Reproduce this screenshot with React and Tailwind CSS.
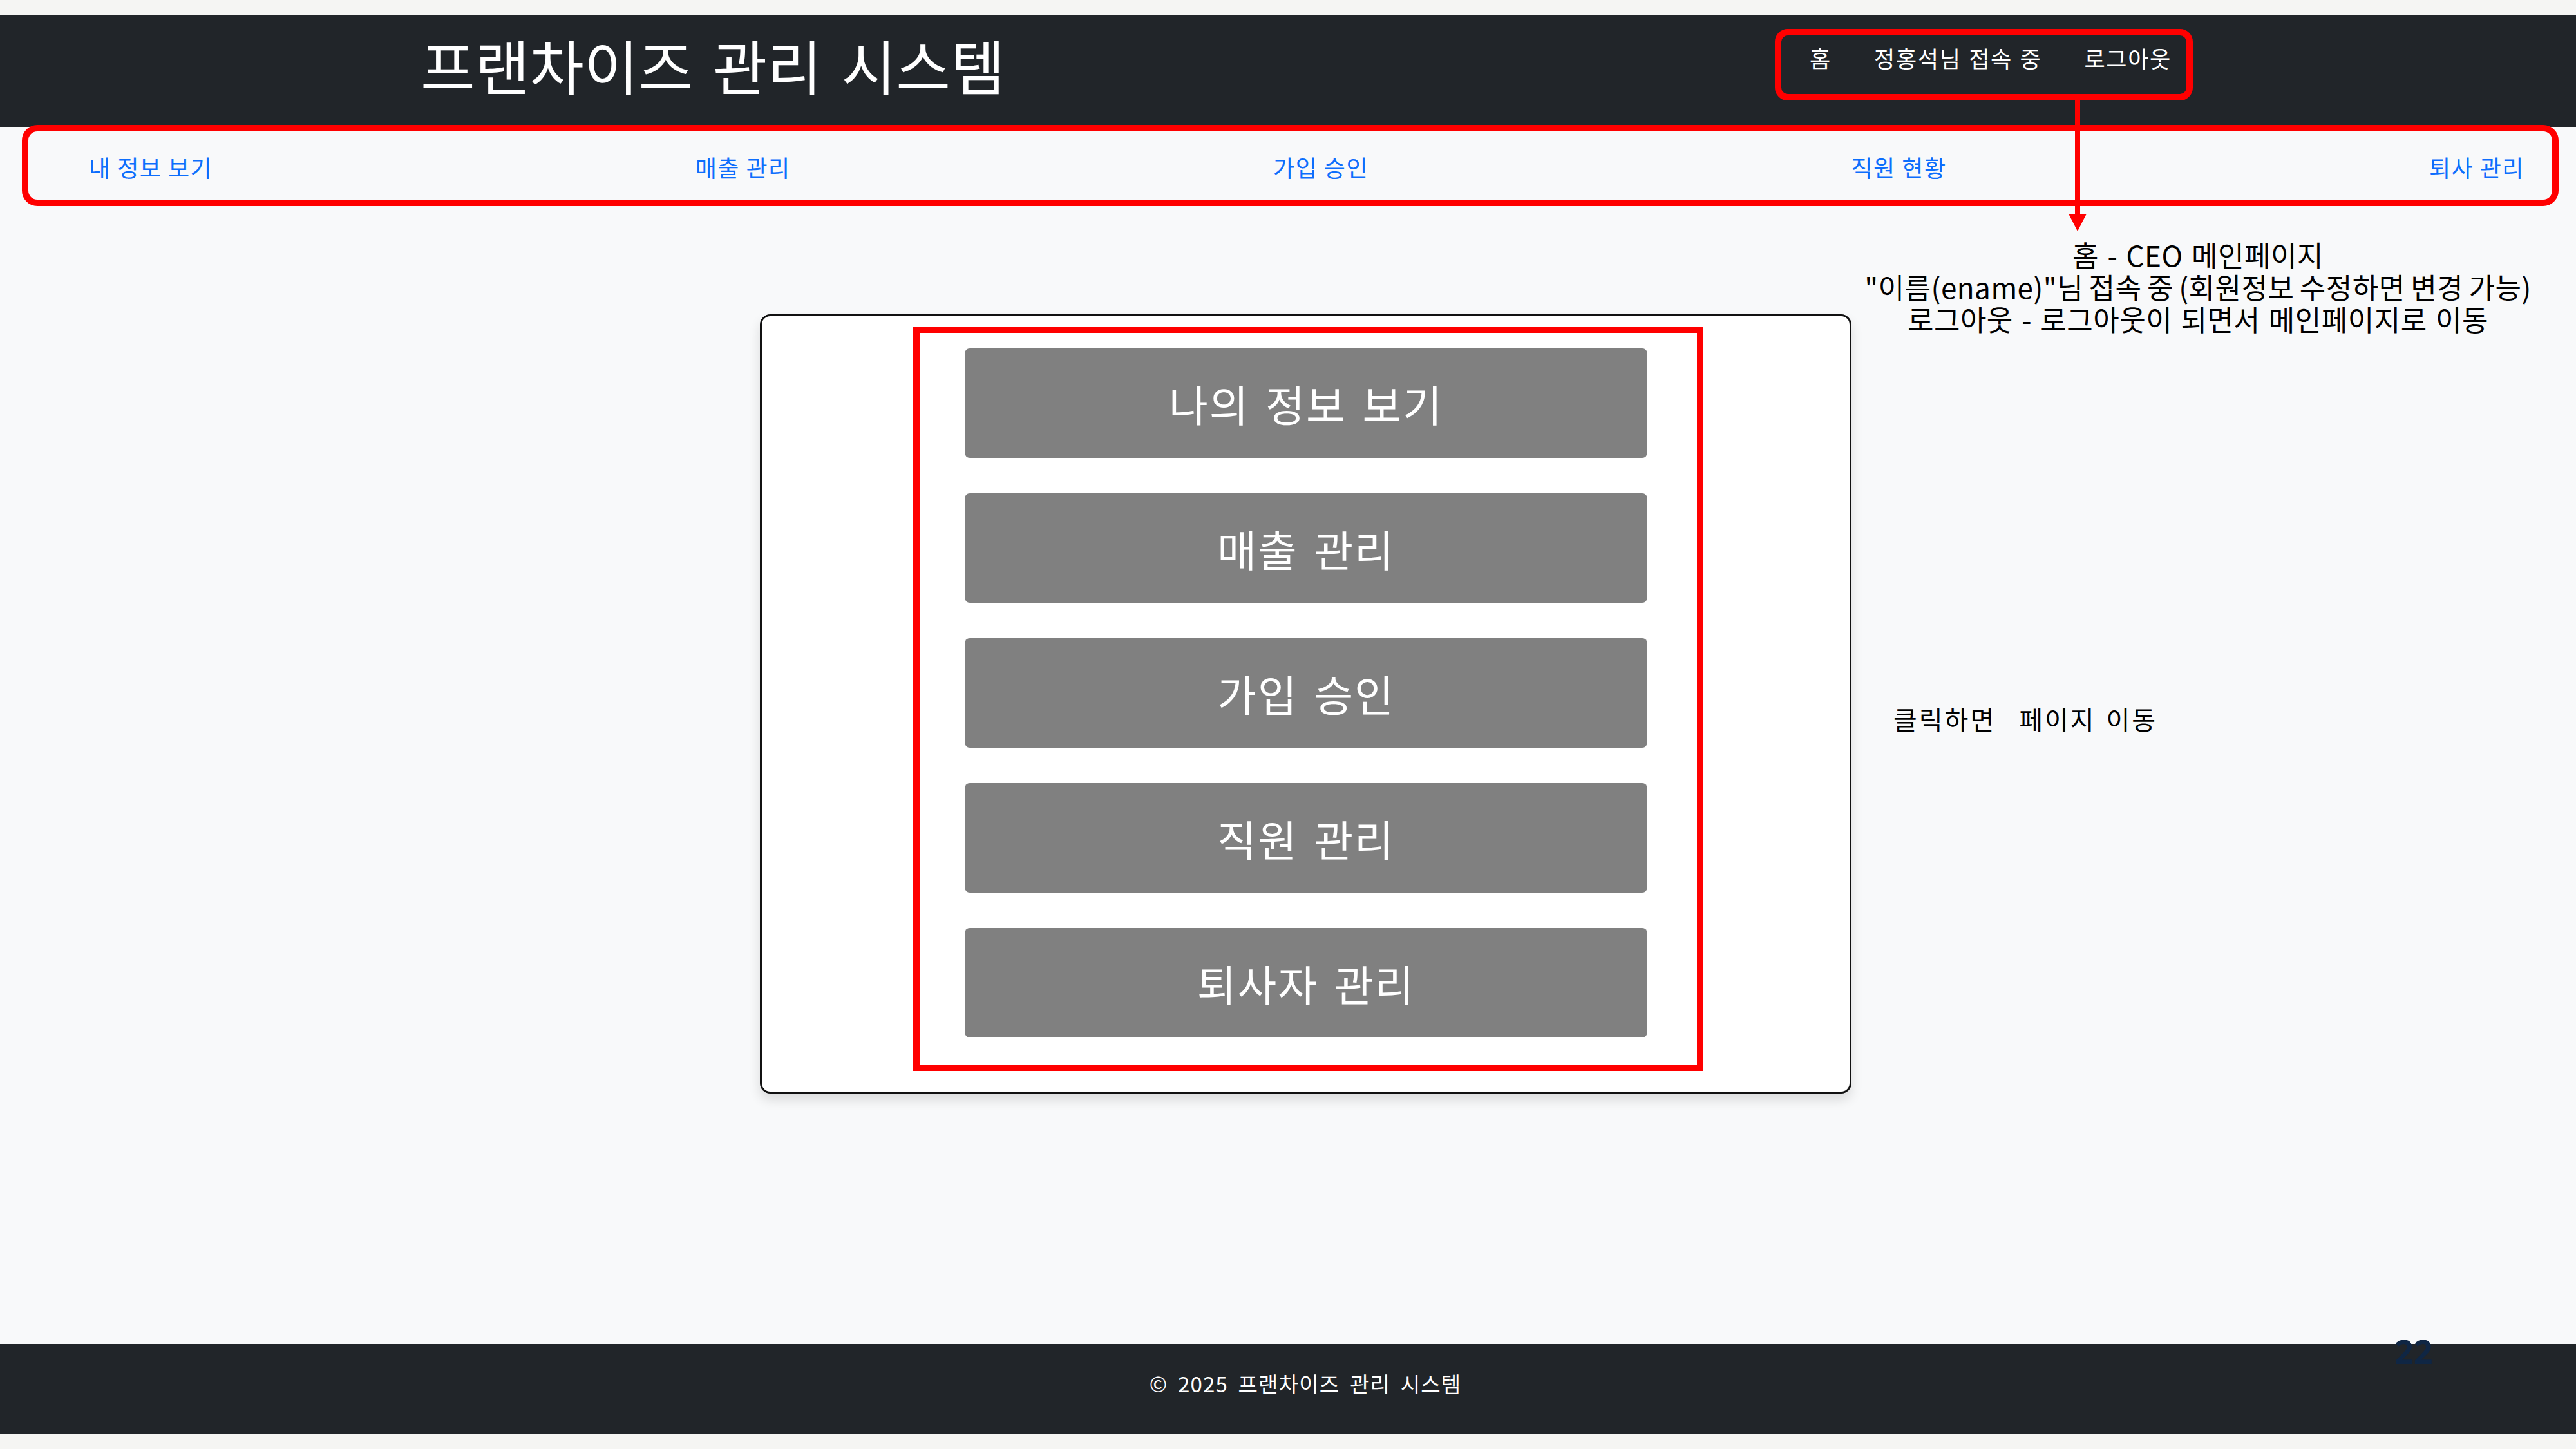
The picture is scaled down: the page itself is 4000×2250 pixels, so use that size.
const FONT = "font-['Noto_Sans_CJK_KR','Noto_Sans',sans-serif]";

const NAV_LINKS = ["내 정보 보기", "매출 관리", "가입 승인", "직원 현황", "퇴사 관리"];
const MENU = ["나의 정보 보기", "매출 관리", "가입 승인", "직원 관리", "퇴사자 관리"];

export default function App() {
  return (
    <div className={`relative w-[4000px] h-[2250px] overflow-hidden bg-[#f5f5f3] py-[23px] ${FONT}`}>
      <div className="h-full flex flex-col bg-[#f8f9fa]">
        <header className="h-[174px] shrink-0 bg-[#212529] flex items-start justify-between pl-[653px] pr-[628px]">
          <h1 className="mt-[31px] text-[92px] leading-none font-normal text-white [word-spacing:10px]">
            프랜차이즈 관리 시스템
          </h1>
          <div className="mt-[49px] flex gap-[66px] text-[35px] leading-none text-white tracking-[1.7px] [word-spacing:2px]">
            <a href="#">홈</a>
            <a href="#">정홍석님 접속 중</a>
            <a href="#">로그아웃</a>
          </div>
        </header>

        <nav className="h-[128px] shrink-0 flex items-start justify-between pt-[44px] pl-[138px] pr-[80px] text-[36px] leading-none text-[#0d6efd] tracking-[1.5px]">
          {NAV_LINKS.map((l) => (
            <a key={l} href="#">{l}</a>
          ))}
        </nav>

        <main className="relative flex-1">
          <div className="ml-[1180px] mt-[163px] w-[1695px] rounded-[16px] border-[3px] border-[#111] bg-white pt-[16px] pb-[32px] pl-[235px] shadow-[0_10px_18px_rgba(0,0,0,0.12)]">
            <div className="w-[1227px] border-[10px] border-[#ff0000] pt-[24px] pb-[42px] pl-[70px]">
              <div className="flex flex-col gap-[55px]">
                {MENU.map((m) => (
                  <button
                    key={m}
                    type="button"
                    className="w-[1060px] h-[170px] rounded-[8px] bg-[#808080] text-white text-[66px] leading-none tracking-[2px] [word-spacing:8px]"
                  >
                    {m}
                  </button>
                ))}
              </div>
            </div>
          </div>

          {/* annotations */}
          <div className="absolute left-[2850px] top-[45px] w-[1126px] text-center text-[44px] leading-[50px] text-black tracking-[0.5px] [word-spacing:3px]">
            <p>홈 - CEO 메인페이지</p>
            <p className="[word-spacing:-2px]">"이름(ename)"님 접속 중 (회원정보 수정하면 변경 가능)</p>
            <p>로그아웃 - 로그아웃이 되면서 메인페이지로 이동</p>
          </div>
          <div className="absolute left-[2940px] top-[771px] flex text-[40px] leading-none text-black tracking-[3px] [word-spacing:4px]">
            <span>클릭하면</span>
            <span className="ml-[36px]">페이지 이동</span>
          </div>
        </main>

        <footer className="h-[140px] shrink-0 bg-[#212529] flex justify-center items-start pt-[45px] pl-[54px]">
          <p className="text-[33px] leading-none text-white tracking-[1.2px] [word-spacing:7px]">© 2025 프랜차이즈 관리 시스템</p>
        </footer>
      </div>

      {/* red annotation boxes */}
      <div className="absolute left-[2756px] top-[45px] w-[649px] h-[111px] rounded-[20px] border-[10px] border-[#ff0000]" />
      <div className="absolute left-[34px] top-[194px] w-[3939px] h-[126px] rounded-[24px] border-[10px] border-[#ff0000]" />
      <svg className="absolute left-[3212px] top-[155px]" width="28" height="204" viewBox="0 0 28 204">
        <rect x="10" y="0" width="8" height="178" fill="#ff0000" />
        <polygon points="0,177 28,177 14,204" fill="#ff0000" />
      </svg>

      <span className="absolute left-[3718px] top-[2072px] text-[52px] leading-none font-bold text-[#0f2644] font-['Noto_Sans',sans-serif]">22</span>
    </div>
  );
}
